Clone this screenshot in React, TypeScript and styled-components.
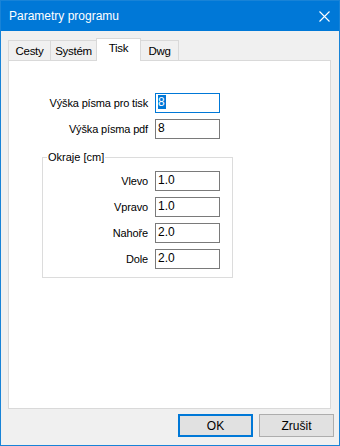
import React from "react";
import styled, { createGlobalStyle } from "styled-components";

const GlobalStyle = createGlobalStyle`
  html, body {
    margin: 0;
    padding: 0;
    background: #ffffff;
  }
  body {
    font-family: "Liberation Sans", Arial, sans-serif;
    color: #000000;
  }
`;

const Window = styled.div`
  width: 340px;
  height: 446px;
  box-sizing: border-box;
  border: 1px solid #1883d7;
  background: #f0f0f0;
  display: flex;
  flex-direction: column;
`;

const TitleBar = styled.div`
  height: 30px;
  flex-shrink: 0;
  background: #0078d7;
  color: #ffffff;
  display: flex;
  align-items: center;
  justify-content: space-between;
  padding: 0 9px 0 8px;
  font-size: 12px;
`;

const Body = styled.div`
  flex: 1;
  display: flex;
  flex-direction: column;
  padding: 7px 8px 0 7px;
  min-height: 0;
`;

const TabStrip = styled.div`
  height: 22px;
  display: flex;
  align-items: flex-end;
`;

const Tab = styled.div<{ $w: number; $active?: boolean }>`
  width: ${(p) => p.$w}px;
  height: ${(p) => (p.$active ? 23 : 20)}px;
  margin-bottom: ${(p) => (p.$active ? -1 : 0)}px;
  box-sizing: border-box;
  border: 1px solid #d9d9d9;
  border-bottom: none;
  background: ${(p) => (p.$active ? "#ffffff" : "#f0f0f0")};
  z-index: ${(p) => (p.$active ? 2 : 1)};
  display: flex;
  justify-content: center;
  padding-top: ${(p) => (p.$active ? 2 : 3)}px;
  font-size: 11.5px;
  letter-spacing: -0.3px;
  line-height: 14px;

  & + & {
    margin-left: -1px;
  }
`;

const Panel = styled.div`
  flex: 1;
  background: #ffffff;
  border: 1px solid #d9d9d9;
  padding-top: 32px;
  display: flex;
  flex-direction: column;
  gap: 6px;
`;

const Row = styled.div<{ $label: number }>`
  display: grid;
  grid-template-columns: ${(p) => p.$label}px 65px;
  column-gap: 7px;
  align-items: center;
`;

const Label = styled.div`
  text-align: right;
  font-size: 11px;
  letter-spacing: -0.15px;
  line-height: 13px;
  white-space: nowrap;
`;

const TextBox = styled.div<{ $focused?: boolean }>`
  width: 65px;
  height: 20px;
  box-sizing: border-box;
  border: 1px solid ${(p) => (p.$focused ? "#0078d7" : "#7a7a7a")};
  background: #ffffff;
  padding: 1px 2px 0;
  font-size: 12px;
  line-height: 15px;
`;

const Selection = styled.span`
  background: #0078d7;
  color: #ffffff;
  padding: 0 1px 0 0;
`;

const Group = styled.fieldset`
  width: 191px;
  box-sizing: border-box;
  margin: 6px 0 0 33px;
  padding: 7px 11px 8px 0;
  border: 1px solid #dcdcdc;
  display: flex;
  flex-direction: column;
  gap: 6px;
`;

const Legend = styled.legend`
  margin-left: 4px;
  padding: 0 1px;
  font-size: 11px;
  line-height: 13px;
`;

const Footer = styled.div`
  height: 36px;
  flex-shrink: 0;
  display: flex;
  justify-content: flex-end;
  align-items: flex-start;
  gap: 6px;
  padding: 5px 5px 0 0;
  box-sizing: border-box;
`;

const Button = styled.button<{ $default?: boolean }>`
  width: 75px;
  height: 23px;
  box-sizing: border-box;
  margin: 0;
  padding: 0;
  background: #e1e1e1;
  border: ${(p) => (p.$default ? "2px solid #0078d7" : "1px solid #adadad")};
  font-family: "Liberation Sans", Arial, sans-serif;
  font-size: 12px;
  color: #000000;
`;

const CloseIcon = () => (
  <svg width="11" height="11" viewBox="0 0 11 11">
    <path d="M0.5 0.5 L10.5 10.5 M10.5 0.5 L0.5 10.5" stroke="#ffffff" strokeWidth="1.1" />
  </svg>
);

const margins = [
  { label: "Vlevo", value: "1.0" },
  { label: "Vpravo", value: "1.0" },
  { label: "Nahoře", value: "2.0" },
  { label: "Dole", value: "2.0" },
];

const tabs = [
  { name: "Cesty", w: 43 },
  { name: "Systém", w: 47 },
  { name: "Tisk", w: 45, active: true },
  { name: "Dwg", w: 39 },
];

export default function App() {
  return (
    <>
      <GlobalStyle />
      <Window>
        <TitleBar>
          <span>Parametry programu</span>
          <CloseIcon />
        </TitleBar>
        <Body>
          <TabStrip>
            {tabs.map((t) => (
              <Tab key={t.name} $w={t.w} $active={t.active}>
                {t.name}
              </Tab>
            ))}
          </TabStrip>
          <Panel>
            <Row $label={139}>
              <Label>Výška písma pro tisk</Label>
              <TextBox $focused>
                <Selection>8</Selection>
              </TextBox>
            </Row>
            <Row $label={139}>
              <Label>Výška písma pdf</Label>
              <TextBox>8</TextBox>
            </Row>
            <Group>
              <Legend>Okraje [cm]</Legend>
              {margins.map((m) => (
                <Row key={m.label} $label={105}>
                  <Label>{m.label}</Label>
                  <TextBox>{m.value}</TextBox>
                </Row>
              ))}
            </Group>
          </Panel>
        </Body>
        <Footer>
          <Button $default>OK</Button>
          <Button>Zrušit</Button>
        </Footer>
      </Window>
    </>
  );
}
